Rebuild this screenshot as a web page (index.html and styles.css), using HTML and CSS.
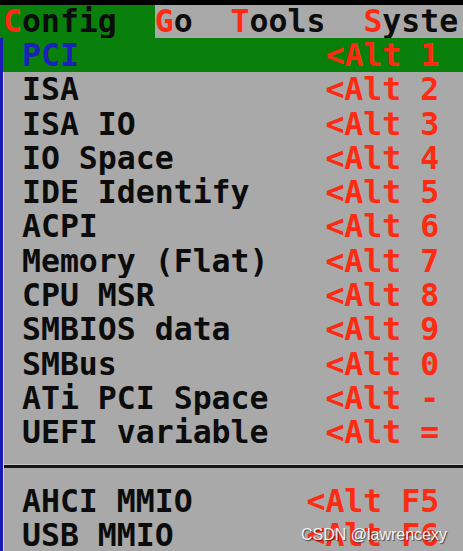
FILE: index.html
```html
<!DOCTYPE html>
<html lang="en">
<head>
    <meta charset="UTF-8">
    <title>RW - Config menu</title>
    <link rel="stylesheet" href="styles.css">
</head>
<body>

    <div class="screen">
        <!-- barra de menu superior -->
        <div class="menubar"><span class="menu-active"><span class="hot">C</span>onfig  </span><span class="hot">G</span>o  <span class="hot">T</span>ools  <span class="hot">S</span>yste</div>

        <!-- menu desplegable -->
        <div class="dropdown">
            <div class="row selected"> <span class="label">PCI</span>             <span class="key">&lt;Alt 1</span></div>
            <div class="row"> ISA             <span class="key">&lt;Alt 2</span></div>
            <div class="row"> ISA IO          <span class="key">&lt;Alt 3</span></div>
            <div class="row"> IO Space        <span class="key">&lt;Alt 4</span></div>
            <div class="row"> IDE Identify    <span class="key">&lt;Alt 5</span></div>
            <div class="row"> ACPI            <span class="key">&lt;Alt 6</span></div>
            <div class="row"> Memory (Flat)   <span class="key">&lt;Alt 7</span></div>
            <div class="row"> CPU MSR         <span class="key">&lt;Alt 8</span></div>
            <div class="row"> SMBIOS data     <span class="key">&lt;Alt 9</span></div>
            <div class="row"> SMBus           <span class="key">&lt;Alt 0</span></div>
            <div class="row"> ATi PCI Space   <span class="key">&lt;Alt -</span></div>
            <div class="row"> UEFI variable   <span class="key">&lt;Alt =</span></div>
            <div class="row separator"><div class="rule"></div></div>
            <div class="row"> AHCI MMIO      <span class="key">&lt;Alt F5</span></div>
            <div class="row"> USB MMIO       <span class="key">&lt;Alt F6</span></div>
        </div>

        <div class="watermark">CSDN @lawrencexy</div>
    </div>

</body>
</html>
```

FILE: styles.css
```css
/* --- pantalla general --- */
html, body {
    margin: 0;
    padding: 0;
    background: #000;
}

.screen {
    position: relative;
    width: 463px;
    height: 551px;
    overflow: hidden;
    padding-top: 5px;
    box-sizing: border-box;
    background: #000;
    font-family: "DejaVu Sans Mono", "Liberation Mono", monospace;
    font-weight: bold;
    font-size: 31.5px;
    color: #0c0c0c;
}

/* --- barra de menu --- */
.menubar {
    height: 33px;
    line-height: 33px;
    background: #a9a9a9;
    overflow: hidden;
    white-space: pre;
}
.menu-active {
    display: inline-block;
    background: #0a800c;
    padding-left: 3px;
}
.hot { color: #ff2a12; }

/* --- desplegable --- */
.dropdown {
    background: #a9a9a9;
    border-left: 3px solid #1a1ab4;
    box-shadow: inset 1px 0 0 #d8d8d8;
    height: 520px;
}
.row {
    height: 34.3px;
    line-height: 34.3px;
    overflow: hidden;
    white-space: pre;
}
.row.selected {
    background: #0a800c;
    box-shadow: inset 1px 0 0 #0a800c;
}
.row.selected .label { color: #1a22b8; }
.key { color: #ff2a12; }

.separator {
    display: flex;
    align-items: center;
}
.rule {
    width: 100%;
    height: 3px;
    margin-left: 1px;
    background: #161616;
    box-shadow: 0 -1px 0 #c4c4c4;
}

/* --- marca de agua --- */
.watermark {
    position: absolute;
    right: 16px;
    bottom: 7px;
    font-family: "Liberation Sans", Arial, sans-serif;
    font-weight: normal;
    font-size: 16px;
    color: #f2f2f2;
    text-shadow: 1px 1px 1px rgba(0, 0, 0, 0.6);
}
```
